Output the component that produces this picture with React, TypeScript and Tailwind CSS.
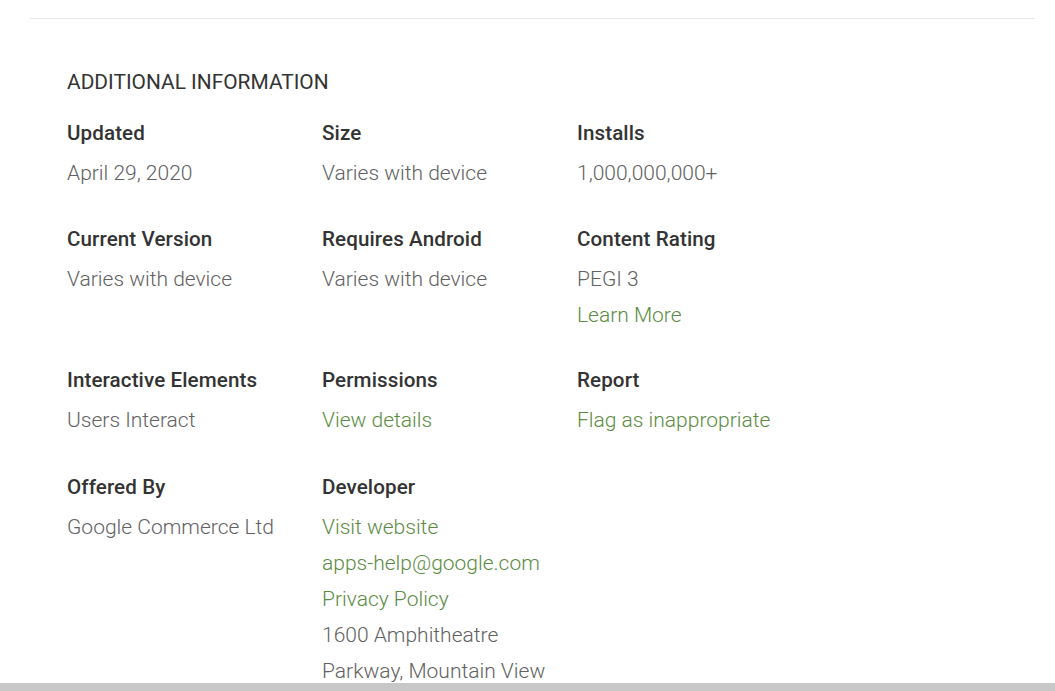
import React from 'react';

// One cell of the "Additional information" grid
interface InfoItem {
  label: string;
  lines: { text: string; link?: boolean }[];
}

const rows: InfoItem[][] = [
  [
    { label: 'Updated', lines: [{ text: 'April 29, 2020' }] },
    { label: 'Size', lines: [{ text: 'Varies with device' }] },
    { label: 'Installs', lines: [{ text: '1,000,000,000+' }] },
  ],
  [
    { label: 'Current Version', lines: [{ text: 'Varies with device' }] },
    { label: 'Requires Android', lines: [{ text: 'Varies with device' }] },
    {
      label: 'Content Rating',
      lines: [{ text: 'PEGI 3' }, { text: 'Learn More', link: true }],
    },
  ],
  [
    { label: 'Interactive Elements', lines: [{ text: 'Users Interact' }] },
    { label: 'Permissions', lines: [{ text: 'View details', link: true }] },
    { label: 'Report', lines: [{ text: 'Flag as inappropriate', link: true }] },
  ],
  [
    { label: 'Offered By', lines: [{ text: 'Google Commerce Ltd' }] },
    {
      label: 'Developer',
      lines: [
        { text: 'Visit website', link: true },
        { text: 'apps-help@google.com', link: true },
        { text: 'Privacy Policy', link: true },
        { text: '1600 Amphitheatre' },
        { text: 'Parkway, Mountain View' },
      ],
    },
  ],
];

// spacing above each row, picked to line up with the screenshot
const rowSpacing = ['mt-[27px]', 'mt-[36px]', 'mt-[35px]', 'mt-[37px]'];

const InfoCell: React.FC<{ item: InfoItem }> = ({ item }) => (
  <div className="w-[255px]">
    <div className="text-[20.6px] leading-[24px] font-medium text-[#333333] tracking-[0.1px]">{item.label}</div>
    <div className="mt-[10px]">
      {item.lines.map((line, i) => (
        <div
          key={i}
          className={`text-[21px] leading-[36px] font-light whitespace-nowrap ${
            line.link ? 'text-[#5b8b42]' : 'text-[#616161]'
          }`}
        >
          {line.text}
        </div>
      ))}
    </div>
  </div>
);

export default function App() {
  return (
    <div className="min-h-screen bg-white" style={{ fontFamily: 'Roboto, "Noto Sans", sans-serif' }}>
      <div className="pl-[30px] pr-[20px] pt-[18px]">
        <div className="border-t border-[#e6e6e6]" />
      </div>
      <div className="pl-[67px] pt-[51px]">
        <h2 className="text-[20.9px] leading-[24px] text-[#333333]">ADDITIONAL INFORMATION</h2>
        {rows.map((row, r) => (
          <div key={r} className={`flex ${rowSpacing[r]}`}>
            {row.map((item) => (
              <InfoCell key={item.label} item={item} />
            ))}
          </div>
        ))}
      </div>
      <div className="fixed bottom-0 left-0 right-0 h-[8px] bg-[#c8c8c8]" />
    </div>
  );
}
